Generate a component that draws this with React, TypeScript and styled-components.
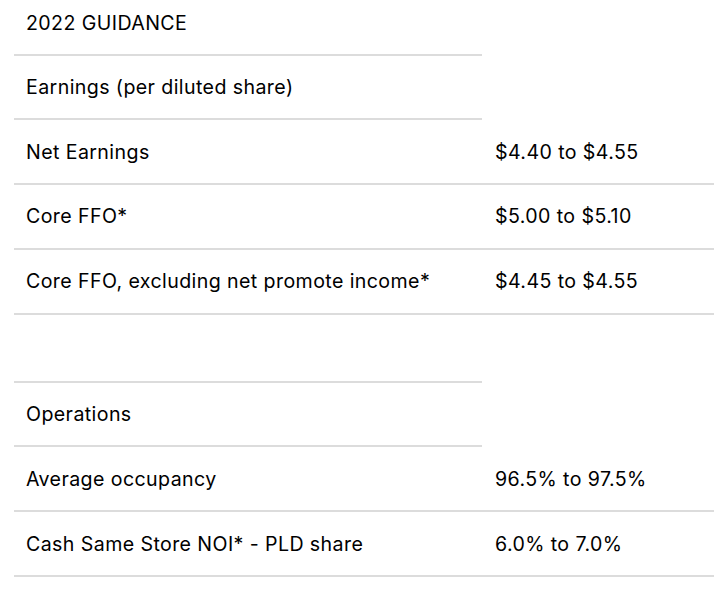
import React from "react";
import styled, { createGlobalStyle } from "styled-components";

const GlobalStyle = createGlobalStyle`
  html, body {
    margin: 0;
    padding: 0;
    background: #ffffff;
  }
  body {
    font-family: Inter, "Noto Sans", "Liberation Sans", sans-serif;
    color: #000000;
    overflow: hidden;
  }
`;

const Table = styled.div`
  display: flex;
  flex-direction: column;
  padding-left: 14px;
`;

const Row = styled.div<{ $first?: boolean; $spacer?: boolean }>`
  display: grid;
  grid-template-columns: 468px 1fr;
  height: ${(p) => (p.$first ? "55.5px" : p.$spacer ? "68px" : "64.8px")};
`;

const Cell = styled.div<{ $value?: boolean }>`
  display: flex;
  align-items: center;
  box-sizing: border-box;
  padding: 0 ${(p) => (p.$value ? "13px" : "12px")};
  font-size: 19.6px;
  line-height: 24px;
  letter-spacing: 0.4px;
  border-bottom: 2px solid #dcdcdc;
`;

const HeadCell = styled(Cell)<{ $first?: boolean }>`
  align-items: ${(p) => (p.$first ? "flex-start" : "center")};
  ${(p) => (p.$first ? "padding-top: 11px;" : "")}
`;

type Item = { label: string; value: string };

const earnings: Item[] = [
  { label: "Net Earnings", value: "$4.40 to $4.55" },
  { label: "Core FFO*", value: "$5.00 to $5.10" },
  { label: "Core FFO, excluding net promote income*", value: "$4.45 to $4.55" },
];

const operations: Item[] = [
  { label: "Average occupancy", value: "96.5% to 97.5%" },
  { label: "Cash Same Store NOI* - PLD share", value: "6.0% to 7.0%" },
];

const DataRow = ({ item }: { item: Item }) => (
  <Row>
    <Cell>{item.label}</Cell>
    <Cell $value>{item.value}</Cell>
  </Row>
);

export default function App() {
  return (
    <>
      <GlobalStyle />
      <Table>
        <Row $first>
          <HeadCell $first>2022 GUIDANCE</HeadCell>
        </Row>
        <Row>
          <HeadCell>Earnings (per diluted share)</HeadCell>
        </Row>
        {earnings.map((it) => (
          <DataRow key={it.label} item={it} />
        ))}
        <Row $spacer>
          <HeadCell />
        </Row>
        <Row>
          <HeadCell>Operations</HeadCell>
        </Row>
        {operations.map((it) => (
          <DataRow key={it.label} item={it} />
        ))}
      </Table>
    </>
  );
}
